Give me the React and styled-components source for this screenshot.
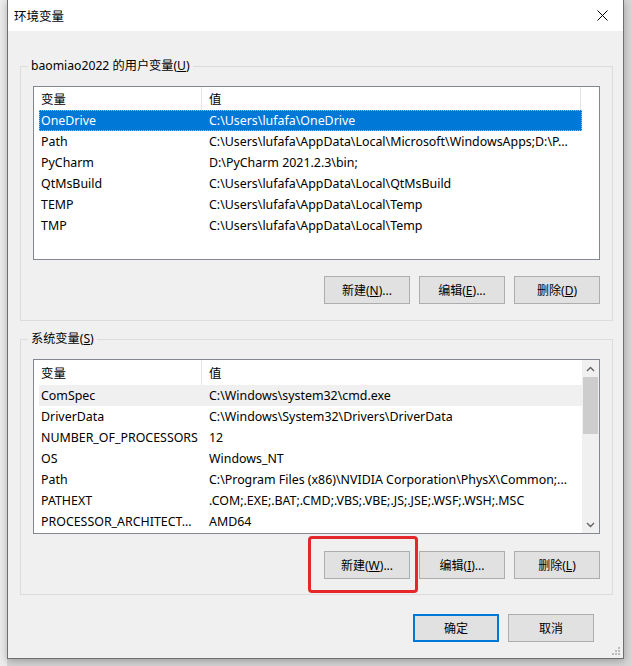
import React from 'react';
import styled, { createGlobalStyle } from 'styled-components';

const GlobalStyle = createGlobalStyle`
  body {
    margin: 0;
    background: #e8e8e8;
    font-family: "Noto Sans", "Noto Sans CJK SC", sans-serif;
    font-size: 12px;
    color: #000;
  }
`

const Page = styled.div`
  width: 632px;
  height: 666px;
  overflow: hidden;
  position: relative;
  background: linear-gradient(90deg, #ececec 0 7px, transparent 7px), #d6d6d6;
`

const Dialog = styled.div`
  margin-left: 7px;
  width: 617px;
  height: 659px;
  box-sizing: border-box;
  border: 1px solid #6e6e6e;
  border-top: none;
  background: #f0f0f0;
  box-shadow: 0 2px 8px rgba(0, 0, 0, 0.28);
  display: flex;
  flex-direction: column;
  position: relative;
`

const TitleBar = styled.div`
  height: 31px;
  background: #fff;
  display: flex;
  align-items: center;
  justify-content: space-between;
  padding: 0 15px 0 6px;
  font-size: 12.5px;
  flex-shrink: 0;
`

const Close = styled.svg`
  width: 11px;
  height: 11px;
`

const Body = styled.div`
  padding: 35px 0 16px 12px;
  display: flex;
  flex-direction: column;
`

const Group = styled.div`
  position: relative;
  width: 593px;
  box-sizing: border-box;
  border: 1px solid #dcdcdc;
  padding: 19px 12px ${p => p.$bottom}px;
  margin-bottom: ${p => p.$gap}px;
`

const Legend = styled.div`
  position: absolute;
  top: -9px;
  left: 7px;
  padding: 0 3px;
  background: #f0f0f0;
  line-height: 16px;
  font-size: 12.2px;
`

const ListBox = styled.div`
  height: ${p => p.$h}px;
  box-sizing: border-box;
  border: 1px solid #828790;
  background: #fff;
  display: flex;
  overflow: hidden;
  font-size: 12.4px;
`

const ListMain = styled.div`
  flex: 1;
  display: flex;
  flex-direction: column;
`

const Header = styled.div`
  display: grid;
  grid-template-columns: ${p => (p.$scroll ? '168px 1fr' : '168px 1fr 18px')};
  height: ${p => p.$h}px;
  flex-shrink: 0;
`

const HeadCell = styled.div`
  padding-left: 7px;
  display: flex;
  align-items: center;
  border-right: 1px solid #e5e5e5;
  &:last-child {
    border-right: none;
  }
`

const Rows = styled.div`
  padding: 0 ${p => (p.$scroll ? 0 : 17)}px 0 5px;
`

const Row = styled.div`
  display: grid;
  grid-template-columns: 168px 1fr;
  height: 21px;
  align-items: center;
  box-sizing: border-box;
  background: ${p => (p.$sel ? '#0078d7' : p.$hover ? '#f0f0f0' : 'transparent')};
  color: ${p => (p.$sel ? '#fff' : '#000')};
  outline: ${p => (p.$sel ? '1px dotted #8fc2ee' : 'none')};
  outline-offset: -1px;
`

const Cell = styled.div`
  padding-left: 2px;
  white-space: nowrap;
  overflow: hidden;
`

const ScrollBar = styled.div`
  width: 17px;
  background: #f0f0f0;
  display: flex;
  flex-direction: column;
`

const Arrow = styled.div`
  height: 17px;
  display: flex;
  align-items: center;
  justify-content: center;
  flex-shrink: 0;
`

const Track = styled.div`
  flex: 1;
  padding: 0 1px;
`

const Thumb = styled.div`
  height: 57px;
  background: #cdcdcd;
`

const ButtonRow = styled.div`
  display: flex;
  justify-content: flex-end;
  gap: 9px;
  margin-top: ${p => p.$top}px;
`

const Button = styled.div`
  width: 86px;
  height: 28px;
  box-sizing: border-box;
  border: ${p => (p.$primary ? '2px solid #0078d7' : '1px solid #adadad')};
  background: #e1e1e1;
  display: flex;
  align-items: center;
  justify-content: center;
  font-size: 12px;
`

const Marked = styled.div`
  position: relative;
`

const RedBox = styled.div`
  position: absolute;
  left: -16px;
  right: -8px;
  top: -15px;
  bottom: -14px;
  border: 3px solid #e5262a;
  border-radius: 4px;
  pointer-events: none;
`

const Footer = styled.div`
  display: flex;
  justify-content: flex-end;
  gap: 9px;
  margin-top: 19px;
  padding-right: 29px;
`

const Grip = styled.svg`
  position: absolute;
  right: 2px;
  bottom: 2px;
`

const userVars = [
  ['OneDrive', 'C:\\Users\\lufafa\\OneDrive'],
  ['Path', 'C:\\Users\\lufafa\\AppData\\Local\\Microsoft\\WindowsApps;D:\\P...'],
  ['PyCharm', 'D:\\PyCharm 2021.2.3\\bin;'],
  ['QtMsBuild', 'C:\\Users\\lufafa\\AppData\\Local\\QtMsBuild'],
  ['TEMP', 'C:\\Users\\lufafa\\AppData\\Local\\Temp'],
  ['TMP', 'C:\\Users\\lufafa\\AppData\\Local\\Temp'],
];

const sysVars = [
  ['ComSpec', 'C:\\Windows\\system32\\cmd.exe'],
  ['DriverData', 'C:\\Windows\\System32\\Drivers\\DriverData'],
  ['NUMBER_OF_PROCESSORS', '12'],
  ['OS', 'Windows_NT'],
  ['Path', 'C:\\Program Files (x86)\\NVIDIA Corporation\\PhysX\\Common;...'],
  ['PATHEXT', '.COM;.EXE;.BAT;.CMD;.VBS;.VBE;.JS;.JSE;.WSF;.WSH;.MSC'],
  ['PROCESSOR_ARCHITECT...', 'AMD64'],
];

const Chevron = ({ up }) => (
  <svg width="9" height="6" viewBox="0 0 9 6">
    <path d={up ? 'M1 5 L4.5 1.5 L8 5' : 'M1 1 L4.5 4.5 L8 1'} fill="none" stroke="#606060" strokeWidth="1.3" />
  </svg>
);

const VarList = ({ items, height, headH, scroll, selected, hover }) => (
  <ListBox $h={height}>
    <ListMain>
      <Header $scroll={scroll} $h={headH}>
        <HeadCell>变量</HeadCell>
        <HeadCell>值</HeadCell>
        {!scroll && <HeadCell />}
      </Header>
      <Rows $scroll={scroll}>
        {items.map(([name, value], i) => (
          <Row key={i} $sel={i === selected} $hover={i === hover}>
            <Cell>{name}</Cell>
            <Cell>{value}</Cell>
          </Row>
        ))}
      </Rows>
    </ListMain>
    {scroll && (
      <ScrollBar>
        <Arrow><Chevron up /></Arrow>
        <Track><Thumb /></Track>
        <Arrow><Chevron /></Arrow>
      </ScrollBar>
    )}
  </ListBox>
);

const Label = ({ text, k, after = '' }) => (
  <span>{text}(<u>{k}</u>){after}</span>
);

export default function App() {
  return (
    <Page>
      <GlobalStyle />
      <Dialog>
        <TitleBar>
          <span>环境变量</span>
          <Close viewBox="0 0 11 11">
            <path d="M0.5 0.5 L10.5 10.5 M10.5 0.5 L0.5 10.5" stroke="#000" strokeWidth="1" />
          </Close>
        </TitleBar>
        <Body>
          <Group $bottom={16} $gap={18}>
            <Legend>baomiao2022 的用户变量(<u>U</u>)</Legend>
            <VarList items={userVars} height={174} headH={23} selected={0} />
            <ButtonRow $top={16}>
              <Button><Label text="新建" k="N" after="..." /></Button>
              <Button><Label text="编辑" k="E" after="..." /></Button>
              <Button><Label text="删除" k="D" /></Button>
            </ButtonRow>
          </Group>
          <Group $bottom={15} $gap={0}>
            <Legend>系统变量(<u>S</u>)</Legend>
            <VarList items={sysVars} height={175} headH={25} scroll hover={0} />
            <ButtonRow $top={17}>
              <Marked>
                <Button><Label text="新建" k="W" after="..." /></Button>
                <RedBox />
              </Marked>
              <Button><Label text="编辑" k="I" after="..." /></Button>
              <Button><Label text="删除" k="L" /></Button>
            </ButtonRow>
          </Group>
          <Footer>
            <Button $primary>确定</Button>
            <Button>取消</Button>
          </Footer>
        </Body>
        <Grip width="10" height="10" viewBox="0 0 10 10">
          {[[8, 2], [8, 5], [8, 8], [5, 5], [5, 8], [2, 8]].map(([x, y], i) => (
            <rect key={i} x={x - 1} y={y - 1} width="2" height="2" fill="#bcbcbc" />
          ))}
        </Grip>
      </Dialog>
    </Page>
  );
}
